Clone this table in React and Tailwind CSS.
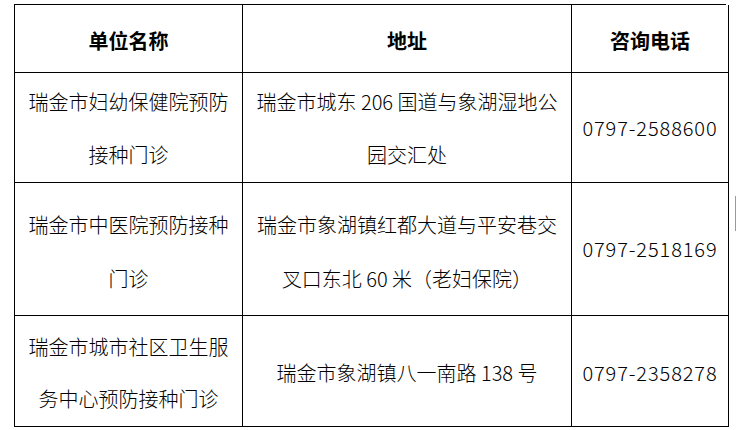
import React from "react";

const font = { fontFamily: '"Noto Sans CJK SC", "Noto Sans", sans-serif' };

function Cell({ children, className = "" }) {
  return (
    <div
      className={
        "flex flex-col items-center justify-center border-r border-b border-black text-center whitespace-nowrap " +
        className
      }
    >
      {children}
    </div>
  );
}

export default function App() {
  return (
    <div className="relative w-[736px] h-[430px] bg-white text-black overflow-hidden" style={font}>
      <div className="pt-[4px] pl-[14px]">
        <div className="grid grid-cols-[228px_329px_157px] grid-rows-[68px_110px_133px_111px] border-l border-t border-black w-[712px]">
          <Cell className="text-[20px] font-bold pt-[5px]">单位名称</Cell>
          <Cell className="text-[20px] font-bold pt-[5px]">地址</Cell>
          <Cell className="text-[20px] font-bold pt-[5px]">咨询电话</Cell>

          <Cell className="text-[20px] font-light leading-[53px]">
            <div>瑞金市妇幼保健院预防</div>
            <div>接种门诊</div>
          </Cell>
          <Cell className="text-[20px] font-light leading-[53px]">
            <div>瑞金市城东 206 国道与象湖湿地公</div>
            <div>园交汇处</div>
          </Cell>
          <Cell className="text-[20px] font-light leading-[53px] tracking-[0.9px]">
            <div>0797-2588600</div>
          </Cell>

          <Cell className="text-[20px] font-light leading-[54px] pt-[5px]">
            <div>瑞金市中医院预防接种</div>
            <div>门诊</div>
          </Cell>
          <Cell className="text-[20px] font-light leading-[54px] pt-[5px]">
            <div>瑞金市象湖镇红都大道与平安巷交</div>
            <div>叉口东北 60 米（老妇保院）</div>
          </Cell>
          <Cell className="text-[20px] font-light leading-[54px] tracking-[0.9px]">
            <div>0797-2518169</div>
          </Cell>

          <Cell className="text-[20px] font-light leading-[52px] pt-[3px]">
            <div>瑞金市城市社区卫生服</div>
            <div>务中心预防接种门诊</div>
          </Cell>
          <Cell className="text-[20px] font-light leading-[52px] pt-[3px]">
            <div>瑞金市象湖镇八一南路 138 号</div>
          </Cell>
          <Cell className="text-[20px] font-light leading-[52px] pt-[3px] tracking-[0.9px]">
            <div>0797-2358278</div>
          </Cell>
        </div>
      </div>
      <div className="absolute left-[735px] top-[196px] w-[1px] h-[35px] bg-[#9a9a9a]" />
    </div>
  );
}
